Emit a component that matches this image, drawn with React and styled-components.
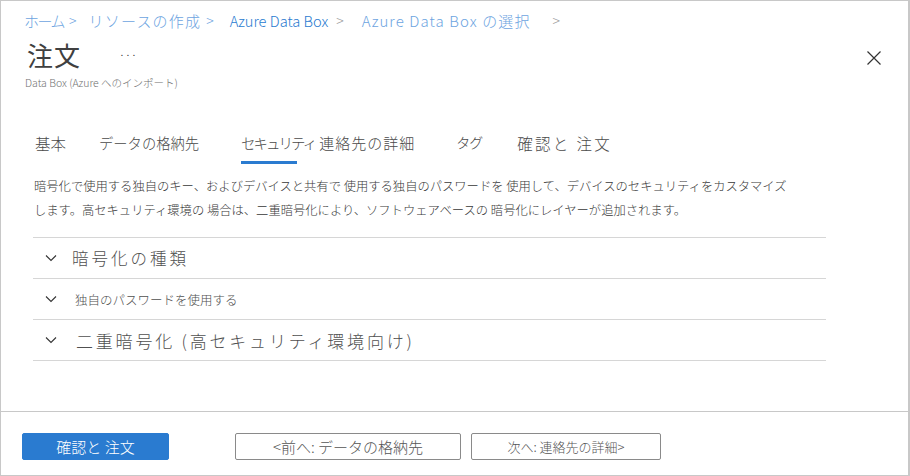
import React from 'react';
import styled, { createGlobalStyle } from 'styled-components';

const GlobalStyle = createGlobalStyle`
  html, body {
    margin: 0;
    padding: 0;
    background: #fff;
  }
  body {
    font-family: "Segoe UI", "Noto Sans CJK JP", "Noto Sans", sans-serif;
    font-weight: 300;
    color: #323130;
  }
`;

const Frame = styled.div`
  box-sizing: border-box;
  width: 910px;
  height: 476px;
  border: 1px solid #c8c8c8;
  border-right-width: 2px;
  display: flex;
  flex-direction: column;
`;

const Main = styled.div`
  flex: 1;
  padding: 0 0 0 23px;
  position: relative;
`;

const Crumbs = styled.nav`
  display: flex;
  align-items: center;
  height: 22px;
  margin-top: 8px;
  white-space: nowrap;
`;

const Crumb = styled.span`
  font-size: ${p => p.size || 15}px;
  color: ${p => (p.strong ? '#2a7bd0' : '#6da4df')};
  letter-spacing: ${p => p.ls || 0}px;
`;

const Sep = styled.span`
  color: ${p => (p.gray ? '#9a9a9a' : '#6da4df')};
  margin: 0 ${p => p.mr}px 0 ${p => p.ml}px;
  font-size: 14px;
`;

const TitleRow = styled.div`
  display: flex;
  align-items: center;
  height: 38px;
  margin-top: 4px;
`;

const Title = styled.h1`
  margin: 0 0 0 3px;
  font-size: 26px;
  font-weight: 400;
  color: #404040;
  letter-spacing: 1px;
`;

const More = styled.span`
  margin-left: 38px;
  font-size: 11px;
  color: #333;
`;

const Close = styled.button`
  position: absolute;
  right: 26px;
  top: 49px;
  background: none;
  border: none;
  padding: 0;
  width: 16px;
  height: 16px;
  display: flex;
`;

const Subtitle = styled.div`
  font-size: 10.5px;
  color: #707070;
  margin-top: 2px;
  margin-left: 1px;
`;

const Tabs = styled.div`
  display: flex;
  margin-top: 38px;
  height: 38px;
`;

const Tab = styled.div`
  position: relative;
  margin-left: ${p => p.ml}px;
  padding-top: 4px;
  white-space: nowrap;
  color: #4a4a4a;
  font-size: ${p => p.size || 15.5}px;
  letter-spacing: ${p => p.ls || 0}px;
  &::after {
    content: '';
    display: ${p => (p.active ? 'block' : 'none')};
    position: absolute;
    left: 0;
    width: 56px;
    top: 33px;
    height: 3px;
    background: #2a7bd0;
  }
`;

const Desc = styled.p`
  margin: 0 0 0 10px;
  font-size: 12.3px;
  line-height: 24px;
  color: #383838;
  padding-top: 8px;
  white-space: nowrap;
`;

const Accordion = styled.div`
  margin: 15px 0 0 9px;
  width: 793px;
  border-top: 1px solid #d6d6d6;
`;

const Row = styled.div`
  display: flex;
  align-items: center;
  height: 40px;
  border-bottom: 1px solid #d6d6d6;
  padding-left: 12px;
`;

const RowLabel = styled.span`
  font-size: ${p => p.size}px;
  color: #505050;
  margin-left: ${p => p.ml}px;
  letter-spacing: ${p => p.ls || 0}px;
`;

const Footer = styled.div`
  box-sizing: border-box;
  border-top: 1px solid #c8c8c8;
  height: 64px;
  display: flex;
  align-items: center;
  padding: 6px 0 0 21px;
  gap: 10px;
`;

const Button = styled.button`
  box-sizing: border-box;
  height: 27px;
  width: ${p => p.w}px;
  margin-right: ${p => p.mr || 0}px;
  font-family: inherit;
  font-weight: 300;
  font-size: ${p => p.size || 14}px;
  border-radius: 2px;
  border: 1px solid ${p => (p.primary ? '#2a7bd0' : '#8a8a8a')};
  background: ${p => (p.primary ? '#2a7bd0' : '#fff')};
  color: ${p => (p.primary ? '#fff' : '#555')};
  padding: 0;
`;

const Chevron = () => (
  <svg width="12" height="8" viewBox="0 0 12 8">
    <path d="M1 1.5 L6 6.5 L11 1.5" fill="none" stroke="#333" strokeWidth="1.1" />
  </svg>
);

export default function App() {
  return (
    <>
      <GlobalStyle />
      <Frame>
        <Main>
          <Crumbs>
            <Crumb ls={-1.5}>ホーム</Crumb>
            <Sep ml={5} mr={12}>&gt;</Sep>
            <Crumb ls={1.2}>リソースの作成</Crumb>
            <Sep ml={5} mr={16}>&gt;</Sep>
            <Crumb strong size={14.7}>Azure Data Box</Crumb>
            <Sep gray ml={8} mr={18}>&gt;</Sep>
            <Crumb ls={1.1}>Azure Data Box の選択</Crumb>
            <Sep gray ml={22} mr={0}>&gt;</Sep>
          </Crumbs>
          <TitleRow>
            <Title>注文</Title>
            <More>···</More>
          </TitleRow>
          <Close aria-label="閉じる">
            <svg width="16" height="16" viewBox="0 0 16 16">
              <path d="M1.5 1.5 L14.5 14.5 M14.5 1.5 L1.5 14.5" stroke="#333" strokeWidth="1.2" />
            </svg>
          </Close>
          <Subtitle>Data Box (Azure へのインポート)</Subtitle>
          <Tabs>
            <Tab ml={11}>基本</Tab>
            <Tab ml={33} size={14.3}>データの格納先</Tab>
            <Tab ml={42} size={14.5} ls={-2} active>セキュリティ</Tab>
            <Tab ml={4} size={15} ls={1}>連絡先の詳細</Tab>
            <Tab ml={41} size={14} ls={-1}>タグ</Tab>
            <Tab ml={35} ls={2.3}>確認と 注文</Tab>
          </Tabs>
          <Desc>
            暗号化で使用する独自のキー、およびデバイスと共有で 使用する独自のパスワードを 使用して、デバイスのセキュリティをカスタマイズ
            <br />
            します。高セキュリティ環境の 場合は、二重暗号化により、ソフトウェアベースの 暗号化にレイヤーが追加されます。
          </Desc>
          <Accordion>
            <Row>
              <Chevron />
              <RowLabel size={16.5} ml={15} ls={3}>暗号化の種類</RowLabel>
            </Row>
            <Row>
              <Chevron />
              <RowLabel size={12.5} ml={18}>独自のパスワードを使用する</RowLabel>
            </Row>
            <Row>
              <Chevron />
              <RowLabel size={17} ml={19} ls={2.8}>二重暗号化 (高セキュリティ環境向け)</RowLabel>
            </Row>
          </Accordion>
        </Main>
        <Footer>
          <Button primary w={147} mr={56} size={15}>確認と 注文</Button>
          <Button w={226} size={15}>&lt;前へ: データの格納先</Button>
          <Button w={190} size={13}>次へ: 連絡先の詳細&gt;</Button>
        </Footer>
      </Frame>
    </>
  );
}
